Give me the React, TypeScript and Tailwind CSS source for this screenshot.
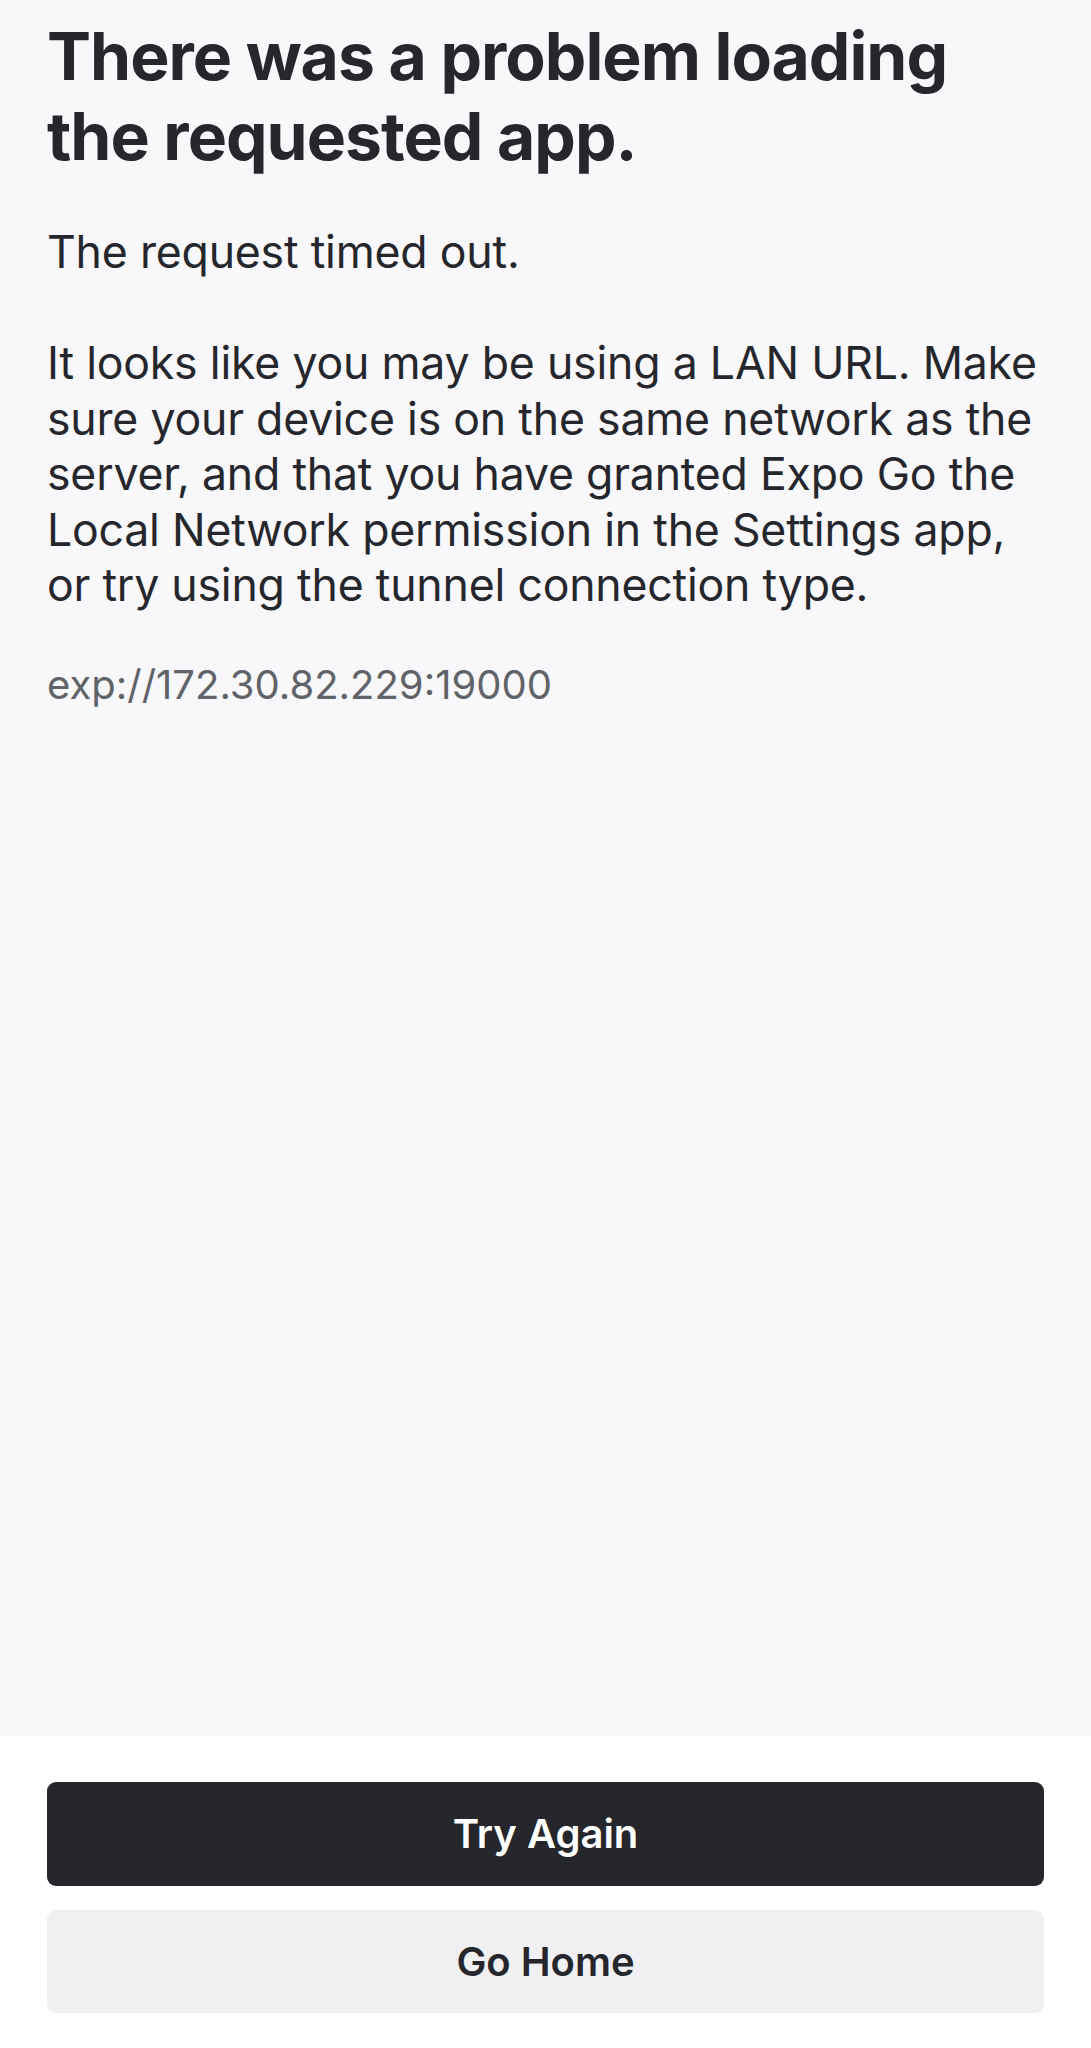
export default function App() {
	return (
		<div className="flex h-[2048px] flex-col font-['Inter',sans-serif] text-[#25272c]">
			<main className="flex-1 bg-[#f8f8fa] px-[47px] pt-[16px]">
				<h1 className="text-[66px] font-bold leading-[80px] tracking-[-1px]">
					There was a problem loading the requested app.
				</h1>
				<p className="mt-[48px] text-[44.6px] leading-[56px] tracking-[-0.2px]">The request timed out.</p>
				<p className="mt-[56px] text-[44.6px] leading-[55.5px] tracking-[-0.2px]">
					It looks like you may be using a LAN URL. Make sure your device is on the same network as the
					server, and that you have granted Expo Go the Local Network permission in the Settings app, or
					try using the tunnel connection type.
				</p>
				<p className="mt-[46px] text-[40px] leading-[50px] text-[#606368]">exp://172.30.82.229:19000</p>
			</main>
			<footer className="flex flex-col gap-[24px] bg-white px-[47px] pt-[46px] pb-[35px]">
				<button className="h-[104px] rounded-[9px] bg-[#25272c] text-[40px] font-semibold text-white">
					Try Again
				</button>
				<button className="h-[103px] rounded-[9px] bg-[#f0f0f3] text-[40px] font-semibold text-[#25272c]">
					Go Home
				</button>
			</footer>
		</div>
	);
}
